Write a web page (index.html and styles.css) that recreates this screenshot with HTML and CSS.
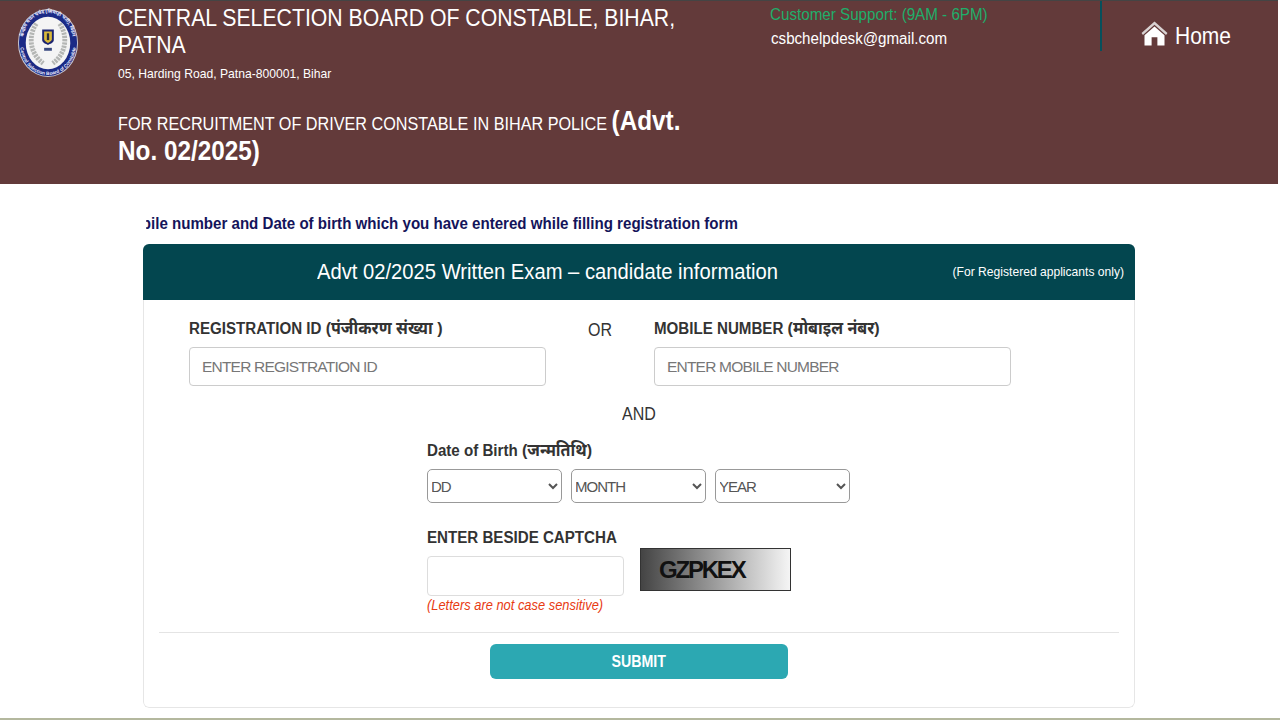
FILE: index.html
```html
<!DOCTYPE html>
<html lang="en">
<head>
<meta charset="utf-8">
<title>CSBC Candidate Information</title>
<link rel="stylesheet" href="styles.css">
</head>
<body>
<header class="site-header">
  <div class="logo-col">
    <svg class="logo" viewBox="0 0 64 72" width="62" height="70" aria-hidden="true">
      <defs>
        <path id="ring-top" d="M6 36C6 18 17 5 32 5C47 5 58 18 58 36"/>
        <path id="ring-bottom" d="M3 36C3 55 16 69 32 69C48 69 61 55 61 36"/>
      </defs>
      <ellipse cx="32" cy="36" rx="31" ry="35" fill="#c9c9d4"/>
      <ellipse cx="32" cy="36" rx="30" ry="34" fill="#1b2a86"/>
      <text class="ring-text"><textPath href="#ring-top" startOffset="50%" text-anchor="middle">केन्द्रीय चयन पर्षद (सिपाही भर्ती), बिहार</textPath></text>
      <text class="ring-text"><textPath href="#ring-bottom" startOffset="50%" text-anchor="middle">Central Selection Board of Constable</textPath></text>
      <ellipse cx="32" cy="36" rx="23" ry="27" fill="#f4f4f4"/>
      <path d="M20 16C12 27 12 46 27 57" fill="none" stroke="#b4b6b4" stroke-width="5" stroke-dasharray="2.4 1"/>
      <path d="M44 16C52 27 52 46 37 57" fill="none" stroke="#b4b6b4" stroke-width="5" stroke-dasharray="2.4 1"/>
      <path d="M26 22H38V33C38 36 34 37 32 38C30 37 26 36 26 33Z" fill="#1c2470"/>
      <path d="M28 24H36V32C36 34 33 35 32 36C31 35 28 34 28 32Z" fill="#d9b93a"/>
      <path d="M30.8 26H33.2V33H30.8Z" fill="#2b2b3a"/>
      <rect x="28" y="41" width="8" height="3" fill="#3a4a80"/>
    </svg>
  </div>
  <div class="title-col">
    <h1 class="board-name">CENTRAL SELECTION BOARD OF CONSTABLE, BIHAR, PATNA</h1>
    <p class="address">05, Harding Road, Patna-800001, Bihar</p>
    <p class="recruitment">FOR RECRUITMENT OF DRIVER CONSTABLE IN BIHAR POLICE <strong class="advt">(Advt. No. 02/2025)</strong></p>
  </div>
  <div class="support-col">
    <p class="support">Customer Support: (9AM - 6PM)</p>
    <p class="email">csbchelpdesk@gmail.com</p>
  </div>
  <nav class="home-col">
    <a class="home-link" href="#">
      <svg class="home-icon" viewBox="0 0 28 26" width="27" height="25" aria-hidden="true">
        <path d="M14 0.5L0.5 12.5L2 14.5L14 4L26 14.5L27.5 12.5Z" fill="#d9d2d2"/>
        <path d="M14 5.6L3.6 14.8V25.5H11V17H17V25.5H24.4V14.8Z" fill="#fff"/>
      </svg>
      <span class="home-text">Home</span>
    </a>
  </nav>
</header>
<main class="content">
  <div class="ticker"><span class="ticker-text">Mobile number and Date of birth which you have entered while filling registration form</span></div>
  <section class="card">
    <div class="card-head">
      <h2 class="card-title">Advt 02/2025 Written Exam – candidate information</h2>
      <span class="card-note">(For Registered applicants only)</span>
    </div>
    <form class="card-body">
      <div class="id-row">
        <div class="field">
          <label class="label">REGISTRATION ID <span class="deva">(पंजीकरण संख्या )</span></label>
          <input class="input" type="text" placeholder="ENTER REGISTRATION ID">
        </div>
        <div class="or"><span class="word">OR</span></div>
        <div class="field">
          <label class="label">MOBILE NUMBER <span class="deva">(मोबाइल नंबर)</span></label>
          <input class="input" type="text" placeholder="ENTER MOBILE NUMBER">
        </div>
      </div>
      <div class="and"><span class="word">AND</span></div>
      <div class="lower">
        <label class="label">Date of Birth <span class="deva">(जन्मतिथि)</span></label>
        <div class="dob-row">
          <select class="select"><option>DD</option></select>
          <select class="select"><option>MONTH</option></select>
          <select class="select"><option>YEAR</option></select>
        </div>
        <label class="label captcha-label">ENTER BESIDE CAPTCHA</label>
        <div class="captcha-row">
          <div class="captcha-entry">
            <input class="input captcha-input" type="text">
            <p class="captcha-note">(Letters are not case sensitive)</p>
          </div>
          <div class="captcha-img">GZPKEX</div>
        </div>
      </div>
      <hr class="divider">
      <div class="actions"><button class="submit" type="button"><span class="submit-text">SUBMIT</span></button></div>
    </form>
  </section>
</main>
<div class="bottom-strip"></div>
</body>
</html>
```
FILE: styles.css
```css
* { box-sizing: border-box; }
html, body { margin: 0; padding: 0; height: 720px; overflow: hidden; }
body { background: #fff; font-family: "Liberation Sans", "Noto Sans", sans-serif; color: #333; position: relative; }
p, h1, h2 { margin: 0; font-weight: normal; }

.site-header { height: 184px; background: #633a3a; border-top: 1px solid #444; display: flex; color: #fff; margin-right: 2px; }
.logo-col { width: 118px; padding: 7px 0 0 17px; flex: none; }
.logo { display: block; }
.ring-text { font-size: 5px; font-weight: bold; fill: #eef; }
.title-col { width: 652px; flex: none; padding-top: 3px; }
.board-name { font-size: 24px; line-height: 27px; width: 640px; transform: scaleX(.885); transform-origin: left; }
.address { font-size: 13px; line-height: 16px; margin-top: 8px; transform: scaleX(.934); transform-origin: left; }
.recruitment { font-size: 18px; line-height: 27px; margin-top: 26px; width: 640px; transform: scaleX(.9); transform-origin: left; }
.advt { font-size: 27px; }
.support-col { width: 330px; flex: none; padding-top: 4px; }
.support { font-size: 17px; line-height: 20px; color: #1fae6a; transform: scaleX(.893); transform-origin: left; }
.email { font-size: 16px; line-height: 20px; margin-top: 4px; margin-left: 1px; transform: scaleX(.946); transform-origin: left; }
.home-col { width: 178px; flex: none; height: 50px; border-left: 2px solid #06505c; padding: 20px 0 0 39px; }
.home-link { display: flex; align-items: flex-start; gap: 7px; color: #fff; text-decoration: none; font-size: 24px; line-height: 26px; }
.home-text { display: block; padding-top: 2px; transform: scaleX(.875); transform-origin: left; }

.content { width: 992px; margin-left: 143px; }
.ticker { height: 60px; margin-left: 3px; padding-top: 30px; overflow: hidden; }
.ticker-text { display: block; white-space: nowrap; margin-left: -26px; font-size: 16px; line-height: 20px; font-weight: bold; color: #14145a; transform: scaleX(.943); transform-origin: left; }
.card { height: 464px; border-radius: 6px; overflow: hidden; }
.card-head { height: 56px; background: #03464f; color: #fff; display: flex; align-items: center; justify-content: space-between; padding: 0 11px 0 174px; }
.card-title { font-size: 22px; line-height: 56px; transform: scaleX(.918); transform-origin: left; }
.card-note { font-size: 12.1px; }
.card-body { display: block; height: 408px; padding: 19px 15px 0; border: 1px solid #e6e6e6; border-top: 0; border-radius: 0 0 6px 6px; }

.id-row { display: flex; padding-left: 30px; }
.field { width: 357px; }
.or { width: 108px; padding-top: 1px; padding-left: 41.5px; font-size: 18px; line-height: 20px; }
.word { display: inline-block; transform: scaleX(.89); }
.or .word { transform-origin: left; }
.label { display: block; height: 20px; font-size: 16px; line-height: 20px; font-weight: bold; color: #333; white-space: nowrap; transform: scaleX(.945); transform-origin: left; }
.deva { font-size: 17px; line-height: 1; }
.input { display: block; width: 100%; height: 39px; margin-top: 8px; padding: 0 12px; border: 1px solid #ccc; border-radius: 4px; font: 15.5px "Liberation Sans", sans-serif; background: #fff; }
.input::placeholder { color: #777; opacity: 1; letter-spacing: -.8px; }

.and { text-align: center; font-size: 18px; line-height: 20px; margin-top: 18px; }
.lower { margin-left: 268px; padding-top: 17px; }
.dob-row { display: flex; gap: 9px; margin-top: 8px; }
.select { width: 135px; height: 34px; padding: 0; border: 1px solid #999; border-radius: 5px; background: #fff; color: #555; font: 15px "Liberation Sans", sans-serif; letter-spacing: -1px; text-indent: -1px; }
.captcha-label { margin-top: 25px; }
.captcha-row { display: flex; gap: 16px; }
.captcha-entry { width: 197px; }
.captcha-input { height: 40px; border-color: #ddd; }
.captcha-note { color: #e83a12; font-size: 14px; line-height: 18px; font-style: italic; white-space: nowrap; transform: scaleX(.92); transform-origin: left; }
.captcha-img { width: 151px; height: 43px; border: 1px solid #333; background: linear-gradient(to right, #444, #f5f5f5); color: #111; font-size: 24px; font-weight: bold; line-height: 41px; letter-spacing: -2.2px; padding-left: 18px; }

.divider { margin: 18px 0 0; border: 0; border-top: 1px solid #e4e4e4; }
.actions { text-align: center; padding-top: 11px; }
.submit { width: 298px; height: 35px; border: 0; border-radius: 6px; background: #2ca8b2; color: #fff; font: bold 16px "Liberation Sans", sans-serif; }
.submit-text { display: inline-block; transform: scaleX(.887); }

.bottom-strip { position: absolute; left: 0; right: 0; bottom: 0; height: 2px; background: #b4b89e; }
```
